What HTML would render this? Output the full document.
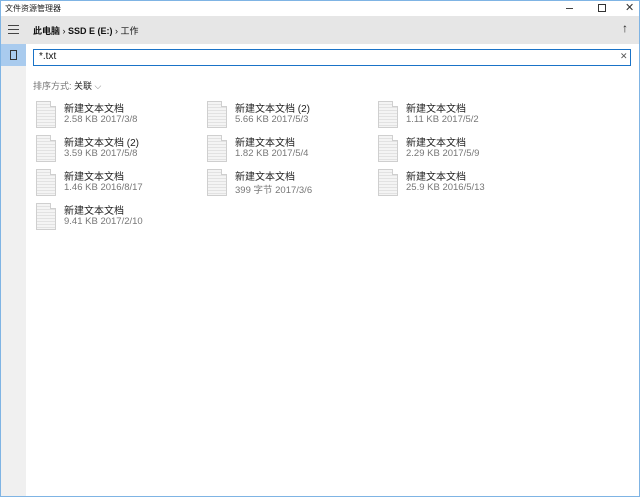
<!DOCTYPE html><html><head><meta charset="utf-8"><style>
body{margin:0;width:640px;height:497px;overflow:hidden;background:#fff;font-family:"Liberation Sans","Noto Sans CJK SC",sans-serif;position:relative}
.a{position:absolute}
.it{position:absolute;width:170px;height:30px}
.ic{position:absolute;left:0;top:0;width:18px;height:25px;background:repeating-linear-gradient(#f4f4f4 0 2px,#e2e2e2 2px 3px);border:1px solid #cfcfcf}
.ic:after{content:"";position:absolute;right:-1px;top:-1px;width:5px;height:5px;background:#fff;border-left:1px solid #cfcfcf;border-bottom:1px solid #cfcfcf}
.n{position:absolute;left:28px;top:-1px;font-size:10px;color:#222;white-space:nowrap}
.d{position:absolute;left:28px;top:13px;font-size:9.5px;color:#777;white-space:nowrap}
</style></head><body>
<div class="a" style="left:0;top:0;width:638px;height:495px;border:1px solid #7fb4e4"></div>
<div class="a" style="left:5px;top:3px;font-size:8px;color:#222">文件资源管理器</div>
<div class="a" style="left:566px;top:8px;width:7px;height:1px;background:#444"></div>
<div class="a" style="left:598px;top:4px;width:6px;height:6px;border:1px solid #333"></div>
<div class="a" style="left:625px;top:1px;font-size:11px;color:#333">✕</div>
<div class="a" style="left:1px;top:16px;width:638px;height:28px;background:#e6e6e6"></div>
<div class="a" style="left:8px;top:25px;width:11px;height:1px;background:#444;box-shadow:0 4px 0 #444,0 8px 0 #444"></div>
<div class="a" style="left:33px;top:24px;font-size:9px;color:#111;font-weight:bold">此电脑 <span style="font-weight:normal">›</span> SSD E (E:) <span style="font-weight:normal">›</span> <span style="font-weight:normal">工作</span></div>
<div class="a" style="left:622px;top:21px;font-size:12px;color:#222">↑</div>
<div class="a" style="left:1px;top:44px;width:25px;height:452px;background:#f0f0f0"></div>
<div class="a" style="left:1px;top:44px;width:25px;height:22px;background:#a9cbee"></div>
<div class="a" style="left:10px;top:50px;width:5px;height:8px;border:1px solid #333"></div>
<div class="a" style="left:33px;top:49px;width:596px;height:15px;border:1px solid #1a73c7;background:#fff"></div>
<div class="a" style="left:39px;top:51px;font-size:10px;color:#111">*.txt</div>
<div class="a" style="left:620px;top:51px;font-size:9px;color:#555">✕</div>
<div class="a" style="left:33px;top:79px;font-size:9px;color:#777">排序方式: <span style="color:#222">关联</span> ⌵</div>
<div class="it" style="left:36px;top:101px"><div class="ic"></div><div class="n">新建文本文档</div><div class="d">2.58 KB 2017/3/8</div></div>
<div class="it" style="left:207px;top:101px"><div class="ic"></div><div class="n">新建文本文档 (2)</div><div class="d">5.66 KB 2017/5/3</div></div>
<div class="it" style="left:378px;top:101px"><div class="ic"></div><div class="n">新建文本文档</div><div class="d">1.11 KB 2017/5/2</div></div>
<div class="it" style="left:36px;top:135px"><div class="ic"></div><div class="n">新建文本文档 (2)</div><div class="d">3.59 KB 2017/5/8</div></div>
<div class="it" style="left:207px;top:135px"><div class="ic"></div><div class="n">新建文本文档</div><div class="d">1.82 KB 2017/5/4</div></div>
<div class="it" style="left:378px;top:135px"><div class="ic"></div><div class="n">新建文本文档</div><div class="d">2.29 KB 2017/5/9</div></div>
<div class="it" style="left:36px;top:169px"><div class="ic"></div><div class="n">新建文本文档</div><div class="d">1.46 KB 2016/8/17</div></div>
<div class="it" style="left:207px;top:169px"><div class="ic"></div><div class="n">新建文本文档</div><div class="d">399 字节 2017/3/6</div></div>
<div class="it" style="left:378px;top:169px"><div class="ic"></div><div class="n">新建文本文档</div><div class="d">25.9 KB 2016/5/13</div></div>
<div class="it" style="left:36px;top:203px"><div class="ic"></div><div class="n">新建文本文档</div><div class="d">9.41 KB 2017/2/10</div></div>
</body></html>
